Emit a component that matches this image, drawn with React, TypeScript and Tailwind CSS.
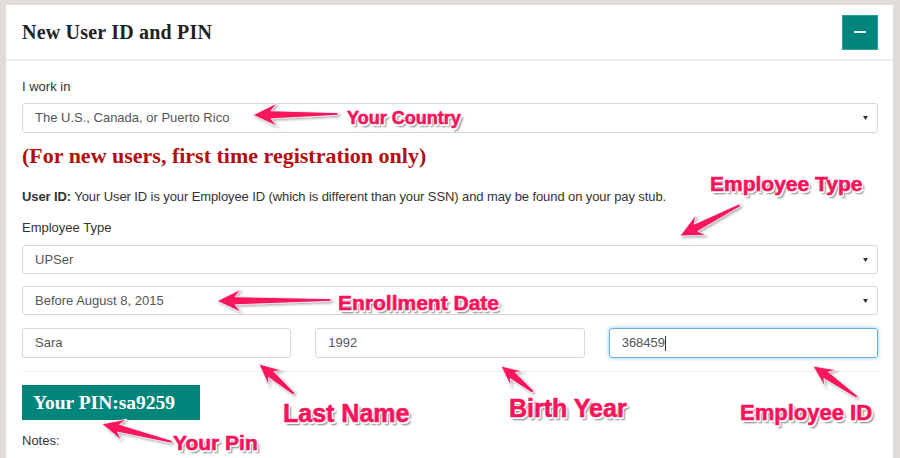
import React from "react";

const arrows: [number, number, number, number, number][] = [
  // tailX, tailY, tipX, tipY, head size
  [338, 114, 253, 115, 21],
  [740, 205, 680, 236, 21],
  [331, 300, 217, 301, 21],
  [294, 394, 259, 364, 19],
  [533, 392, 501, 366, 18],
  [857, 397, 813, 366, 19],
  [172, 442, 102, 424, 20],
];

function arrowPoints(x1: number, y1: number, x2: number, y2: number, head: number) {
  const dx = x2 - x1;
  const dy = y2 - y1;
  const len = Math.hypot(dx, dy);
  const ux = dx / len;
  const uy = dy / len;
  const nx = -uy;
  const ny = ux;
  const bx = x2 - ux * head;
  const by = y2 - uy * head;
  const shaft = 4;
  const wing = head * 0.55;
  const pts = [
    [x1 + nx * 1.3, y1 + ny * 1.3],
    [bx + ux * 3 + nx * shaft, by + uy * 3 + ny * shaft],
    [bx - ux * 3 + nx * wing, by - uy * 3 + ny * wing],
    [x2, y2],
    [bx - ux * 3 - nx * wing, by - uy * 3 - ny * wing],
    [bx + ux * 3 - nx * shaft, by + uy * 3 - ny * shaft],
    [x1 - nx * 1.3, y1 - ny * 1.3],
  ];
  return pts.map((p) => `${p[0].toFixed(1)},${p[1].toFixed(1)}`).join(" ");
}

function Caret() {
  return (
    <svg width="5" height="4" viewBox="0 0 5 4" className="shrink-0">
      <path d="M0 0h5L2.5 4z" fill="#333" />
    </svg>
  );
}

function Select({ value, className }: { value: string; className: string }) {
  return (
    <div
      className={`flex items-center justify-between border border-[#d5d9dc] rounded-[3px] pl-3 pr-[9px] text-[13px] text-[#555] ${className}`}
    >
      <span>{value}</span>
      <Caret />
    </div>
  );
}

function Label({ text, className }: { text: string; className: string }) {
  return (
    <span
      className={`absolute font-bold text-[#f8135b] leading-none whitespace-nowrap [-webkit-text-stroke:0.6px_#f8135b] [text-shadow:1.5px_0_0_#fff,-1px_0_0_#fff,0_1.5px_0_#fff,0_-1px_0_#fff,1.5px_1.5px_0_#fff,2.5px_2.5px_2px_#7a7a7a] ${className}`}
    >
      {text}
    </span>
  );
}

export default function App() {
  return (
    <div className="relative w-[900px] h-[458px] overflow-hidden bg-[#e0ddd8] pt-[5px] pl-[6px] font-['Liberation_Sans',Arial,sans-serif] text-[#333]">
      <div className="w-[887px] h-[600px] bg-white">
        {/* Header */}
        <div className="h-[56px] flex items-center justify-between pl-4 pr-[15px] border-b-2 border-[#eee]">
          <h1 className="font-['Liberation_Serif',Georgia,serif] font-bold text-[20px] tracking-[0.2px] text-[#222]">
            New User ID and PIN
          </h1>
          <button className="w-[36px] h-[35px] bg-[#00857a] border border-[#2aa197] flex items-center justify-center">
            <span className="block w-[12px] h-[2px] bg-white" />
          </button>
        </div>

        {/* Body */}
        <div className="pt-4 pl-4 pr-[15px] text-[13px]">
          <div className="leading-[20px]">I work in</div>
          <Select value="The U.S., Canada, or Puerto Rico" className="mt-[6px] h-[30px]" />

          <h2 className="mt-[11px] leading-[24px] font-['Liberation_Serif',Georgia,serif] font-bold text-[22px] text-[#b30d0d]">
            (For new users, first time registration only)
          </h2>

          <p className="mt-[19px] leading-[20px] tracking-[-0.1px]">
            <b>User ID:</b> Your User ID is your Employee ID (which is different than your SSN) and may be found on
            your pay stub.
          </p>

          <div className="mt-[11px] leading-[20px]">Employee Type</div>
          <Select value="UPSer" className="mt-[7px] h-[29px]" />
          <Select value="Before August 8, 2015" className="mt-[12px] h-[29px]" />

          <div className="mt-[13px] grid grid-cols-3 gap-6">
            <div className="h-[30px] flex items-center border border-[#d5d9dc] rounded-[3px] px-3 text-[#555]">Sara</div>
            <div className="h-[30px] flex items-center border border-[#d5d9dc] rounded-[3px] px-3 text-[#555]">1992</div>
            <div className="h-[30px] flex items-center border border-[#66afe9] rounded-[3px] px-3 text-[#555] shadow-[0_0_4px_rgba(102,175,233,0.7)]">
              368459
              <span className="inline-block w-px h-[15px] bg-[#333]" />
            </div>
          </div>

          <div className="mt-[13px] border-t border-[#eee]" />

          <div className="mt-[13px] w-[178px] h-[35px] bg-[#00857a] flex items-center pl-[11px] font-['Liberation_Serif',Georgia,serif] font-bold text-[19.5px] text-white">
            Your PIN:sa9259
          </div>

          <div className="mt-[11px] leading-[20px]">Notes:</div>
        </div>
      </div>

      {/* Annotations */}
      <svg className="absolute left-0 top-0 pointer-events-none" width="900" height="458">
        <defs>
          <filter id="sh" x="-20%" y="-20%" width="140%" height="140%">
            <feDropShadow dx="1.5" dy="1.5" stdDeviation="1.2" floodColor="#777" floodOpacity="0.6" />
          </filter>
        </defs>
        {arrows.map(([x1, y1, x2, y2, h], i) => (
          <polygon
            key={i}
            points={arrowPoints(x1, y1, x2, y2, h)}
            fill="#f8135b"
            stroke="#fff"
            strokeWidth="0.8"
            filter="url(#sh)"
          />
        ))}
      </svg>
      <Label text="Your Country" className="left-[347px] top-[109px] text-[18px]" />
      <Label text="Employee Type" className="left-[710px] top-[173px] text-[21px]" />
      <Label text="Enrollment Date" className="left-[338px] top-[292px] text-[21px]" />
      <Label text="Last Name" className="left-[283px] top-[401px] text-[25px]" />
      <Label text="Birth Year" className="left-[509px] top-[396px] text-[25px]" />
      <Label text="Employee ID" className="left-[740px] top-[402px] text-[22px]" />
      <Label text="Your Pin" className="left-[173px] top-[432px] text-[21px]" />
    </div>
  );
}
